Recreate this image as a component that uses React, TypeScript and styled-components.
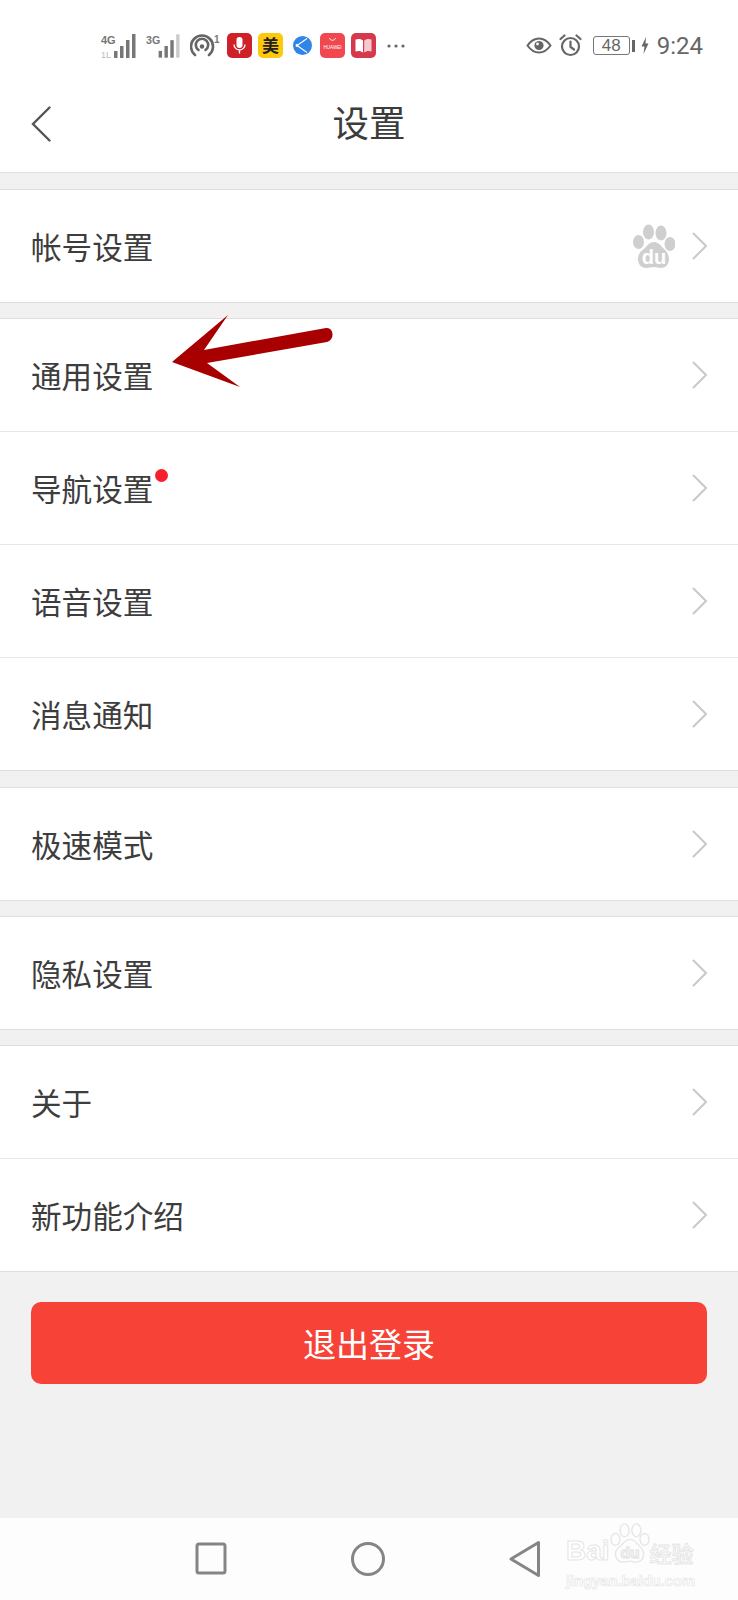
import React from 'react';
import styled, { createGlobalStyle } from 'styled-components';

const GlobalStyle = createGlobalStyle`
  html, body {
    margin: 0;
    padding: 0;
    background: #f1f1f1;
    font-family: "Noto Sans CJK SC", "Noto Sans", sans-serif;
  }
`;

const Page = styled.div`
  position: relative;
  width: 738px;
  height: 1600px;
  display: flex;
  flex-direction: column;
  overflow: hidden;
`;

const StatusBar = styled.div`
  height: 80px;
  background: #fff;
  display: flex;
  align-items: center;
  justify-content: space-between;
  padding: 11px 35px 0 100px;
  box-sizing: border-box;
`;

const StatusGroup = styled.div`
  display: flex;
  align-items: center;
`;

const Slot = styled.span<{ $gap?: number }>`
  display: inline-flex;
  align-items: center;
  margin-right: ${(p) => p.$gap ?? 0}px;
`;

const BatteryBox = styled.span`
  width: 37px;
  height: 19px;
  border: 1px solid #777;
  border-radius: 3px;
  box-sizing: border-box;
  display: flex;
  align-items: center;
  justify-content: center;
  font: 17px/1 "Liberation Sans", sans-serif;
  color: #666;
`;

const BatteryNub = styled.span`
  width: 3px;
  height: 12px;
  margin: 0 6px 0 2px;
  background: #666;
`;

const Clock = styled.span`
  font: 24px/1 "Roboto", "Liberation Sans", sans-serif;
  color: #666;
  margin-left: 8px;
`;

const Header = styled.header`
  position: relative;
  height: 92px;
  box-sizing: content-box;
  background: #fff;
  border-bottom: 1px solid #dedede;
  display: flex;
  align-items: center;
  justify-content: center;
  margin-bottom: 16px;
`;

const BackButton = styled.span`
  position: absolute;
  left: 31px;
  top: 26px;
  display: flex;
`;

const Title = styled.h1`
  margin: 0 0 10px;
  font-size: 36.5px;
  font-weight: 400;
  color: #3c3c3c;
`;

const Group = styled.section`
  background: #fff;
  border-top: 1px solid #dedede;
  border-bottom: 1px solid #dedede;
  margin-bottom: 15.25px;
`;

const Row = styled.div`
  height: 112px;
  padding: 0 31px;
  display: flex;
  align-items: center;
  justify-content: space-between;
  & + & {
    border-top: 1px solid #e6e6e6;
  }
`;

const Label = styled.span`
  position: relative;
  font-size: 30.6px;
  line-height: 40px;
  color: #3d3d3d;
`;

const RedDot = styled.span`
  position: absolute;
  right: -15px;
  top: 1px;
  width: 13px;
  height: 13px;
  border-radius: 50%;
  background: #f5222d;
`;

const RowRight = styled.span`
  display: flex;
  align-items: center;
  gap: 17px;
`;

const LogoutButton = styled.button`
  display: block;
  margin: 15px 31px 0;
  width: 676px;
  height: 82px;
  border: 0;
  border-radius: 10px;
  background: #f74337;
  color: #fff;
  font-family: inherit;
  font-size: 33px;
`;

const NavBar = styled.nav`
  position: relative;
  margin-top: auto;
  height: 82px;
  background: #fdfdfd;
  display: flex;
  align-items: center;
  padding: 0 0 0 195px;
  gap: 123px;
`;

const Watermark = styled.div`
  position: absolute;
  left: 566px;
  top: 3px;
  width: 140px;
`;

const WatermarkBrand = styled.div`
  display: flex;
  align-items: flex-end;
  height: 44px;
  font: bold 28px/1 "Liberation Sans", sans-serif;
  color: #fff;
  -webkit-text-stroke: 1px #e6e6e6;
`;

const WatermarkCn = styled.span`
  flex: none;
  font: 500 22px/1 "Noto Sans CJK SC", sans-serif;
  white-space: nowrap;
  margin-bottom: 2px;
`;

const WatermarkUrl = styled.div`
  font: bold 14.7px/1 "Liberation Sans", sans-serif;
  color: #fff;
  -webkit-text-stroke: 0.7px #e6e6e6;
  white-space: nowrap;
  margin-top: 9px;
`;

const ArrowOverlay = styled.svg`
  position: absolute;
  left: 170px;
  top: 313px;
`;

const Signal = ({ label, dim }: { label: string; dim?: boolean }) => (
  <svg width={label === '4G' ? 38 : 37} height="26" viewBox="0 0 38 26">
    <text x="1" y="11" fontFamily="Liberation Sans" fontWeight="700" fontSize="11" fill="#777">{label}</text>
    {label === '4G' && (
      <text x="1" y="25" fontFamily="Liberation Sans" fontSize="9" fill="#bbb">1L</text>
    )}
    <rect x="14" y="18" width="3.5" height="7" fill="#777" />
    <rect x="20" y="13" width="3.5" height="12" fill="#777" />
    <rect x="26" y="7" width="3.5" height="18" fill="#777" />
    <rect x="32" y="1" width="3.5" height="24" fill={dim ? '#ccc' : '#777'} />
  </svg>
);

const Hotspot = () => (
  <svg width="30" height="24" viewBox="0 0 30 24" fill="none">
    <path d="M5 21a11 11 0 1 1 14 0" stroke="#666" strokeWidth="2.6" strokeLinecap="round" />
    <path d="M8.5 16a6.2 6.2 0 1 1 7 0" stroke="#666" strokeWidth="2.6" strokeLinecap="round" />
    <circle cx="12" cy="12.5" r="2.2" fill="#666" />
    <text x="24" y="9" fontFamily="Liberation Sans" fontSize="10" fontWeight="700" fill="#777">1</text>
  </svg>
);

const MicApp = () => (
  <svg width="25" height="25" viewBox="0 0 25 25">
    <rect width="25" height="25" rx="5" fill="#cf2029" />
    <rect x="9.5" y="4" width="6" height="11" rx="3" fill="#fff" />
    <path d="M7 11.5a5.5 5.5 0 0 0 11 0M12.5 17v3.5" stroke="#fff" strokeWidth="1.3" fill="none" />
  </svg>
);

const MeituanApp = () => (
  <svg width="25" height="25" viewBox="0 0 25 25">
    <rect width="25" height="25" rx="5" fill="#fdc909" />
    <text x="12.5" y="19" textAnchor="middle" fontFamily="Noto Sans CJK SC" fontWeight="700" fontSize="17" fill="#222">美</text>
  </svg>
);

const BrowserApp = () => (
  <svg width="21" height="21" viewBox="0 0 21 21">
    <circle cx="10.5" cy="10.5" r="9.5" fill="#2f86e6" />
    <path d="M15 3.5 5 10.5l10 7" stroke="#fff" strokeWidth="1.1" fill="none" />
    <circle cx="5" cy="10.5" r="1.4" fill="#fff" />
  </svg>
);

const MallApp = () => (
  <svg width="25" height="25" viewBox="0 0 25 25">
    <rect width="25" height="25" rx="5" fill="#f0484e" />
    <path d="M9.5 5c.5 3 5.5 3 6 0" stroke="#fff" strokeWidth="0.9" fill="none" />
    <text x="12.5" y="15.5" textAnchor="middle" fontFamily="Liberation Sans" fontSize="4.6" fill="#fff">HUAWEI</text>
  </svg>
);

const BookApp = () => (
  <svg width="25" height="25" viewBox="0 0 25 25">
    <rect width="25" height="25" rx="5" fill="#d53a4c" />
    <path d="M4.5 6.5c3-1 6-.5 7.500 1v12c-2-1.500-4.500-2-7.500-1z" fill="#fff" />
    <path d="M13.200 7.500c1.500-1.500 4.300-2 7.300-1v12c-3-1-5.300-.5-7.300 1z" fill="#f7c9ce" />
  </svg>
);

const MoreDots = () => (
  <svg width="18" height="6" viewBox="0 0 18 6">
    <circle cx="2" cy="3" r="1.6" fill="#666" />
    <circle cx="9" cy="3" r="1.6" fill="#666" />
    <circle cx="16" cy="3" r="1.6" fill="#666" />
  </svg>
);

const Eye = () => (
  <svg width="26" height="17" viewBox="0 0 26 17">
    <path d="M1.5 8.5C5 3.5 9 1.5 13 1.5s8 2 11.5 7c-3.500 5-7.500 7-11.500 7s-8-2-11.500-7z" fill="none" stroke="#666" strokeWidth="2" />
    <circle cx="13" cy="8.5" r="4.6" fill="#666" />
    <circle cx="11.5" cy="7" r="1.4" fill="#fff" />
  </svg>
);

const Alarm = () => (
  <svg width="23" height="23" viewBox="0 0 23 23" fill="none" stroke="#666" strokeWidth="2.2">
    <circle cx="11.5" cy="12.5" r="8.5" />
    <path d="M11.5 7.5v5.500l3.500 2.500M1.500 5l4-3.500M21.500 5l-4-3.500" strokeLinecap="round" />
  </svg>
);

const Bolt = () => (
  <svg width="8" height="17" viewBox="0 0 8 17">
    <path d="M5 0 .5 9.5H3.500L2.500 17 7.500 6.500H4.500z" fill="#666" />
  </svg>
);

const Chevron = () => (
  <svg width="15" height="28" viewBox="0 0 15 28" fill="none">
    <path d="M1.5 1.500 14 14 1.500 26.500" stroke="#c9c9c9" strokeWidth="2" strokeLinecap="round" />
  </svg>
);

const BaiduPaw = () => (
  <svg width="42" height="45" viewBox="0 0 42 45">
    <ellipse cx="15.5" cy="8" rx="5.5" ry="7.5" fill="#cfcfcf" />
    <ellipse cx="28" cy="9" rx="5.5" ry="7.5" fill="#cfcfcf" />
    <ellipse cx="5.5" cy="18" rx="5.5" ry="7" fill="#cfcfcf" />
    <ellipse cx="37" cy="20" rx="5.5" ry="7" fill="#cfcfcf" />
    <path d="M21 18c5 0 7 4 10 7 3 2.500 5 6 5 10 0 6-4 9-8 9-3 0-5-1-7-1s-5 1-8 1c-5 0-8-4-8-9s3-8 6-10c3-3 5-7 10-7z" fill="#cfcfcf" />
    <text x="21" y="40" textAnchor="middle" fontFamily="Liberation Sans" fontWeight="700" fontSize="20" fill="#fff">du</text>
  </svg>
);

const NavSquare = () => (
  <svg width="32" height="34" viewBox="0 0 32 34" fill="none">
    <rect x="2" y="2" width="28" height="29" rx="2" stroke="#858585" strokeWidth="3" />
  </svg>
);

const NavCircle = () => (
  <svg width="36" height="38" viewBox="0 0 36 38" fill="none">
    <circle cx="18" cy="19" r="15.5" stroke="#858585" strokeWidth="3" />
  </svg>
);

const NavBack = () => (
  <svg width="32" height="38" viewBox="0 0 32 38" fill="none">
    <path d="M29.5 2.500v33L2 19z" stroke="#858585" strokeWidth="3" strokeLinejoin="round" />
  </svg>
);

const WatermarkPaw = () => (
  <svg width="40" height="44" viewBox="0 0 44 44" fill="none" stroke="#e6e6e6" strokeWidth="1.5">
    <ellipse cx="16" cy="8" rx="5" ry="7" />
    <ellipse cx="29" cy="8" rx="5" ry="7" />
    <ellipse cx="6" cy="18" rx="5" ry="6.5" />
    <ellipse cx="38" cy="18" rx="5" ry="6.5" />
    <path d="M22 18c5 0 7 4 10 7 3 2.500 5 6 5 9 0 6-4 9-8 9-3 0-5-1-7-1s-5 1-8 1c-5 0-8-4-8-9 0-4 3-7 6-9 3-3 5-7 10-7z" />
    <text x="22" y="38" textAnchor="middle" fontFamily="Liberation Sans" fontWeight="700" fontSize="17" fill="#fff">du</text>
  </svg>
);

const groups = [
  [{ title: '帐号设置', paw: true }],
  [
    { title: '通用设置' },
    { title: '导航设置', dot: true },
    { title: '语音设置' },
    { title: '消息通知' },
  ],
  [{ title: '极速模式' }],
  [{ title: '隐私设置' }],
  [{ title: '关于' }, { title: '新功能介绍' }],
] as { title: string; paw?: boolean; dot?: boolean }[][];

const App: React.FC = () => (
  <Page>
    <GlobalStyle />

    <StatusBar>
      <StatusGroup>
        <Slot $gap={7}><Signal label="4G" /></Slot>
        <Slot $gap={8}><Signal label="3G" dim /></Slot>
        <Slot $gap={7}><Hotspot /></Slot>
        <Slot $gap={6}><MicApp /></Slot>
        <Slot $gap={9}><MeituanApp /></Slot>
        <Slot $gap={7}><BrowserApp /></Slot>
        <Slot $gap={6}><MallApp /></Slot>
        <Slot $gap={11}><BookApp /></Slot>
        <MoreDots />
      </StatusGroup>
      <StatusGroup>
        <Slot $gap={7}><Eye /></Slot>
        <Slot $gap={11}><Alarm /></Slot>
        <BatteryBox>48</BatteryBox>
        <BatteryNub />
        <Bolt />
        <Clock>9:24</Clock>
      </StatusGroup>
    </StatusBar>

    <Header>
      <BackButton>
        <svg width="20" height="36" viewBox="0 0 20 36" fill="none">
          <path d="M18.5 1.5 2 18l16.5 16.5" stroke="#555" strokeWidth="2.4" strokeLinecap="round" />
        </svg>
      </BackButton>
      <Title>设置</Title>
    </Header>

    {groups.map((rows) => (
      <Group key={rows[0].title}>
        {rows.map((row) => (
          <Row key={row.title}>
            <Label>
              {row.title}
              {row.dot && <RedDot />}
            </Label>
            <RowRight>
              {row.paw && <BaiduPaw />}
              <Chevron />
            </RowRight>
          </Row>
        ))}
      </Group>
    ))}

    <LogoutButton>退出登录</LogoutButton>

    <NavBar>
      <NavSquare />
      <NavCircle />
      <NavBack />
      <Watermark>
        <WatermarkBrand>
          Bai
          <WatermarkPaw />
          <WatermarkCn>经验</WatermarkCn>
        </WatermarkBrand>
        <WatermarkUrl>jingyan.baidu.com</WatermarkUrl>
      </Watermark>
    </NavBar>

    <ArrowOverlay width="168" height="78" viewBox="0 0 168 78">
      <path
        d="M2 49 58 2 34 37 156 15c8-1 9 12 1 14L37 50l33 24z"
        fill="#a80000"
      />
    </ArrowOverlay>
  </Page>
);

export default App;
